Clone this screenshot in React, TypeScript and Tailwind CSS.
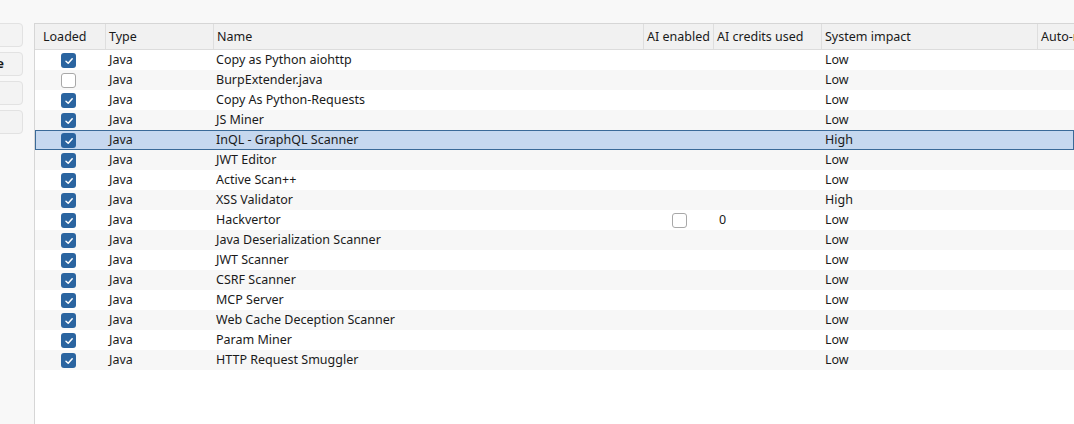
import React from "react";

type Row = { loaded: boolean; name: string; impact: string; ai?: boolean };

const rows: Row[] = [
  { loaded: true, name: "Copy as Python aiohttp", impact: "Low" },
  { loaded: false, name: "BurpExtender.java", impact: "Low" },
  { loaded: true, name: "Copy As Python-Requests", impact: "Low" },
  { loaded: true, name: "JS Miner", impact: "Low" },
  { loaded: true, name: "InQL - GraphQL Scanner", impact: "High" },
  { loaded: true, name: "JWT Editor", impact: "Low" },
  { loaded: true, name: "Active Scan++", impact: "Low" },
  { loaded: true, name: "XSS Validator", impact: "High" },
  { loaded: true, name: "Hackvertor", impact: "Low", ai: true },
  { loaded: true, name: "Java Deserialization Scanner", impact: "Low" },
  { loaded: true, name: "JWT Scanner", impact: "Low" },
  { loaded: true, name: "CSRF Scanner", impact: "Low" },
  { loaded: true, name: "MCP Server", impact: "Low" },
  { loaded: true, name: "Web Cache Deception Scanner", impact: "Low" },
  { loaded: true, name: "Param Miner", impact: "Low" },
  { loaded: true, name: "HTTP Request Smuggler", impact: "Low" },
];

function Check({ checked }: { checked: boolean }) {
  if (!checked)
    return (
      <span className="block w-[15px] h-[15px] rounded-[3px] border border-[#a8a8a8] bg-white" />
    );
  return (
    <span className="flex items-center justify-center w-[15px] h-[15px] rounded-[3px] bg-[#2a64a0]">
      <svg width="10" height="10" viewBox="0 0 10 10">
        <path d="M2 5.2 L4.2 7.3 L8.2 2.8" fill="none" stroke="white" strokeWidth="1.5" strokeLinecap="round" strokeLinejoin="round" />
      </svg>
    </span>
  );
}

const cols = "grid grid-cols-[71px_108px_430px_70px_108px_216px_1fr]";

export default function App() {
  return (
    <div
      className="w-[1074px] h-[424px] bg-[#f8f8f8] flex overflow-hidden text-[12.5px] text-[#1a1a1a]"
      style={{ fontFamily: '"Noto Sans", "Open Sans", sans-serif' }}
    >
      <div className="w-[34px] shrink-0 pt-[23px] flex flex-col gap-[5px]">
        {[0, 1, 2, 3].map((i) => (
          <div
            key={i}
            className="ml-[-20px] w-[43px] h-[24px] rounded-[4px] border border-[#e2e2e2] bg-[#f3f3f3] flex items-center justify-end pr-[18px] font-bold"
          >
            {i === 1 ? "e" : ""}
          </div>
        ))}
      </div>
      <div className="flex-1 mt-[23px] border-l border-t border-[#d6d6d6] bg-white overflow-hidden">
        <div className={`${cols} h-[26px] bg-[#f1f1f1] border-b border-[#dcdcdc] whitespace-nowrap`}>
          {["Loaded", "Type", "Name", "AI enabled", "AI credits used", "System impact", "Auto-r"].map((h, i) => (
            <div
              key={h}
              className={`flex items-center pt-[2px] overflow-hidden ${i < 6 ? "border-r border-[#dedede]" : ""} ${
                i === 0 ? "pl-[8px]" : "pl-[3px]"
              }`}
            >
              {h}
            </div>
          ))}
        </div>
        {rows.map((r, i) => {
          const sel = i === 4;
          return (
            <div
              key={r.name}
              className={`${cols} h-[20px] items-center pt-px whitespace-nowrap ${
                sel
                  ? "bg-[#c6d8ef] shadow-[inset_0_0_0_1px_#3a6a98]"
                  : i % 2 === 1
                  ? "bg-[#f7f7f7]"
                  : "bg-white"
              }`}
            >
              <div className="flex pl-[26px]">
                <Check checked={r.loaded} />
              </div>
              <div className="pl-[3px]">Java</div>
              <div className="pl-[2px]">{r.name}</div>
              <div className="flex justify-center">
                {r.ai ? (
                  <span className="block w-[15px] h-[15px] rounded-[3px] border border-[#a8a8a8] bg-white" />
                ) : null}
              </div>
              <div className="pl-[5px]">{r.ai ? "0" : ""}</div>
              <div className="pl-[3px]">{r.impact}</div>
              <div />
            </div>
          );
        })}
      </div>
    </div>
  );
}
